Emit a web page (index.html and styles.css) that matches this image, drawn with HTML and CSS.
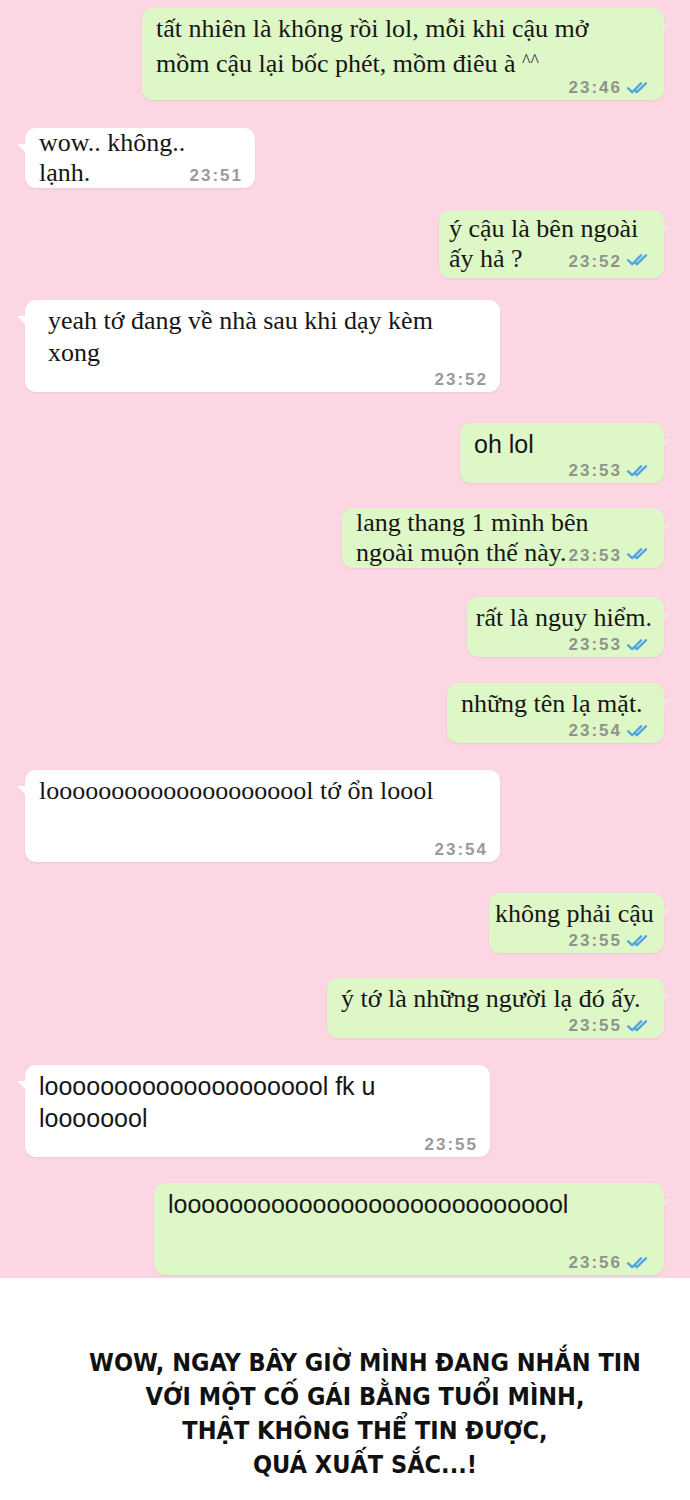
FILE: index.html
```html
<!DOCTYPE html>
<html lang="vi">
<head>
<meta charset="utf-8">
<title>Chat</title>
<link rel="stylesheet" href="styles.css">
</head>
<body>
<svg width="0" height="0" class="defs" aria-hidden="true">
  <symbol id="ticks" viewBox="0 0 20 12">
    <path d="M1.5 6.2 L5 9.6 L12.6 2" fill="none" stroke="#4ea5e2" stroke-width="2" stroke-linecap="round" stroke-linejoin="round"/>
    <path d="M7.6 8.2 L9 9.6 L16.8 2" fill="none" stroke="#4ea5e2" stroke-width="2" stroke-linecap="round" stroke-linejoin="round"/>
  </symbol>
</svg>

<main class="chat">
  <div class="row out first">
    <div class="bubble sent w522 a">
      <div class="line">tất nhiên là không rồi lol, mỗi khi cậu mở</div>
      <div class="line">mồm cậu lại bốc phét, mồm điêu à <span class="caret">^^</span></div>
      <div class="meta"><span class="time">23:46</span><svg class="tick"><use href="#ticks"/></svg></div>
    </div>
  </div>

  <div class="row in mt28">
    <div class="bubble recv w230 b">
      <div class="line">wow.. không..</div>
      <div class="line split"><span>lạnh.</span><span class="meta inline"><span class="time">23:51</span></span></div>
    </div>
  </div>

  <div class="row out mt22">
    <div class="bubble sent w225 b tall">
      <div class="line">ý cậu là bên ngoài</div>
      <div class="line split"><span>ấy hả ?</span><span class="meta inline"><span class="time">23:52</span><svg class="tick"><use href="#ticks"/></svg></span></div>
    </div>
  </div>

  <div class="row in mt22">
    <div class="bubble recv w475 a padl">
      <div class="line">yeah tớ đang về nhà sau khi dạy kèm</div>
      <div class="line">xong</div>
      <div class="meta"><span class="time">23:52</span></div>
    </div>
  </div>

  <div class="row out mt31">
    <div class="bubble sent w204 a sans">
      <div class="line">oh lol</div>
      <div class="meta"><span class="time">23:53</span><svg class="tick"><use href="#ticks"/></svg></div>
    </div>
  </div>

  <div class="row out mt25">
    <div class="bubble sent w322 b">
      <div class="line">lang thang 1 mình bên</div>
      <div class="line split"><span>ngoài muộn thế này.</span><span class="meta inline"><span class="time">23:53</span><svg class="tick"><use href="#ticks"/></svg></span></div>
    </div>
  </div>

  <div class="row out mt29">
    <div class="bubble sent w197 a right">
      <div class="line">rất là nguy hiểm.</div>
      <div class="meta"><span class="time">23:53</span><svg class="tick"><use href="#ticks"/></svg></div>
    </div>
  </div>

  <div class="row out mt26">
    <div class="bubble sent w217 a">
      <div class="line">những tên lạ mặt.</div>
      <div class="meta"><span class="time">23:54</span><svg class="tick"><use href="#ticks"/></svg></div>
    </div>
  </div>

  <div class="row in mt27">
    <div class="bubble recv w475 a">
      <div class="line">looooooooooooooooooool tớ ổn loool</div>
      <div class="line">&nbsp;</div>
      <div class="meta"><span class="time">23:54</span></div>
    </div>
  </div>

  <div class="row out mt31">
    <div class="bubble sent w175 a right">
      <div class="line">không phải cậu</div>
      <div class="meta"><span class="time">23:55</span><svg class="tick"><use href="#ticks"/></svg></div>
    </div>
  </div>

  <div class="row out mt25">
    <div class="bubble sent w337 a">
      <div class="line">ý tớ là những người lạ đó ấy.</div>
      <div class="meta"><span class="time">23:55</span><svg class="tick"><use href="#ticks"/></svg></div>
    </div>
  </div>

  <div class="row in mt27">
    <div class="bubble recv w465 a sans">
      <div class="line">looooooooooooooooooool fk u</div>
      <div class="line">loooooool</div>
      <div class="meta"><span class="time">23:55</span></div>
    </div>
  </div>

  <div class="row out mt26">
    <div class="bubble sent w510 a sans">
      <div class="line">looooooooooooooooooooooooooool</div>
      <div class="line">&nbsp;</div>
      <div class="meta"><span class="time">23:56</span><svg class="tick"><use href="#ticks"/></svg></div>
    </div>
  </div>
</main>

<section class="caption">
  <p>WOW, NGAY BÂY GIỜ MÌNH ĐANG NHẮN TIN</p>
  <p>VỚI MỘT CỐ GÁI BẰNG TUỔI MÌNH,</p>
  <p>THẬT KHÔNG THỂ TIN ĐƯỢC,</p>
  <p>QUÁ XUẤT SẮC...!</p>
</section>
</body>
</html>
```

FILE: styles.css
```css
* { box-sizing: border-box; }

html, body {
  margin: 0;
  padding: 0;
  background: #ffffff;
}

.defs { position: absolute; }

.chat {
  background: #fcd7e3;
  padding: 8px 26px 3px 25px;
  display: flex;
  flex-direction: column;
}

.row { display: flex; }
.row.out { justify-content: flex-end; }
.row.in { justify-content: flex-start; }

.mt22 { margin-top: 22px; }
.mt25 { margin-top: 25px; }
.mt26 { margin-top: 26px; }
.mt27 { margin-top: 27px; }
.mt28 { margin-top: 28px; }
.mt29 { margin-top: 29px; }
.mt31 { margin-top: 31px; }

.bubble {
  position: relative;
  border-radius: 11px;
  font-family: "Liberation Serif", "Times New Roman", serif;
  font-size: 26px;
  color: #161616;
  box-shadow: 0 1px 2px rgba(120, 90, 100, 0.12);
  padding-left: 14px;
  padding-right: 12px;
}

.bubble.sent { background: #def7c6; }
.bubble.recv { background: #ffffff; }

.bubble.recv::before {
  content: "";
  position: absolute;
  left: -8px;
  top: 16px;
  border-style: solid;
  border-width: 0 9px 9px 0;
  border-color: transparent #ffffff transparent transparent;
}

.bubble.sent::after {
  content: "";
  position: absolute;
  right: -7px;
  top: 16px;
  border-style: solid;
  border-width: 0 0 8px 8px;
  border-color: transparent transparent transparent #e7f3d8;
  opacity: 0.6;
}

.caret { font-size: 18px; vertical-align: 5px; }

/* type a: time on its own line */
.bubble.a { padding-top: 5px; padding-bottom: 1px; }
.bubble.a .line { line-height: 32px; height: 32px; }

/* type b: time inline with last line */
.bubble.b { padding-top: 0; padding-bottom: 0; }
.bubble.b .line { line-height: 30px; height: 30px; }
.bubble.b.tall { padding-top: 4px; padding-bottom: 4px; padding-left: 10px; }

.bubble.padl { padding-left: 23px; }
.bubble.right { padding-left: 6px; }
.bubble.right .line { text-align: right; }

.bubble.sans {
  font-family: "Liberation Sans", Arial, sans-serif;
  font-size: 25px;
}

.line { white-space: nowrap; }

.line.split {
  display: flex;
  align-items: baseline;
  justify-content: space-between;
}

.meta {
  display: flex;
  justify-content: flex-end;
  align-items: center;
  height: 22px;
  gap: 2px;
}

.meta.inline {
  display: inline-flex;
  height: auto;
  align-items: baseline;
}

.time {
  font-family: "Liberation Sans", Arial, sans-serif;
  font-weight: bold;
  font-size: 17px;
  letter-spacing: 2px;
  color: #8e948b;
}

.recv .time { color: #9a9a9a; }

.tick {
  width: 28px;
  height: 14px;
  display: inline-block;
  vertical-align: -1px;
}

.w175 { width: 175px; }
.w197 { width: 197px; }
.w204 { width: 204px; }
.w217 { width: 217px; }
.w225 { width: 225px; }
.w230 { width: 230px; }
.w322 { width: 322px; }
.w337 { width: 337px; }
.w465 { width: 465px; }
.w475 { width: 475px; }
.w510 { width: 510px; }
.w522 { width: 522px; }

.caption {
  padding: 68px 0 0 40px;
  text-align: center;
  font-family: "DejaVu Sans Condensed", "DejaVu Sans", sans-serif;
  font-weight: bold;
  font-size: 25px;
  line-height: 34px;
  color: #111111;
}

.caption p { margin: 0; }
```
